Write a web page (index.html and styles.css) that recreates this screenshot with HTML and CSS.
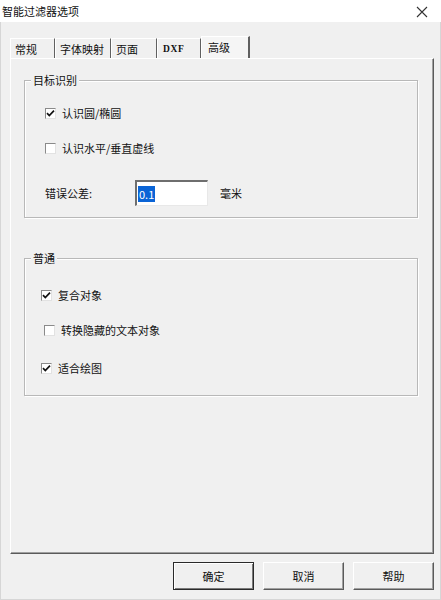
FILE: index.html
```html
<!DOCTYPE html>
<html lang="zh-CN">
<head>
<meta charset="utf-8">
<title>智能过滤器选项</title>
<link rel="stylesheet" href="styles.css">
</head>
<body>
<div class="window">
  <div class="titlebar">
    <span class="title">智能过滤器选项</span>
    <svg class="close" width="12" height="12" viewBox="0 0 12 12"><path d="M1 1 L11 11 M11 1 L1 11" stroke="#333" stroke-width="1.1" fill="none"/></svg>
  </div>
  <div class="tabs">
    <div class="tab t1">常规</div>
    <div class="tab t2">字体映射</div>
    <div class="tab t3">页面</div>
    <div class="tab t4 mono">DXF</div>
    <div class="tab t5 selected">高级</div>
  </div>
  <div class="panel">
    <div class="group g1">
      <span class="group-title">目标识别</span>
      <label class="row r1"><span class="cb checked"><svg width="9" height="9" viewBox="0 0 9 9"><path d="M1 4.2 L3.3 6.6 L8 1.6" stroke="#111" stroke-width="1.7" fill="none"/></svg></span>认识圆/椭圆</label>
      <label class="row r2"><span class="cb"></span>认识水平/垂直虚线</label>
      <div class="row r3">
        <span class="lbl">错误公差:</span>
        <span class="input"><span class="sel">0.1</span></span>
        <span class="unit">毫米</span>
      </div>
    </div>
    <div class="group g2">
      <span class="group-title">普通</span>
      <label class="row s1"><span class="cb checked"><svg width="9" height="9" viewBox="0 0 9 9"><path d="M1 4.2 L3.3 6.6 L8 1.6" stroke="#111" stroke-width="1.7" fill="none"/></svg></span>复合对象</label>
      <label class="row s2"><span class="cb"></span>转换隐藏的文本对象</label>
      <label class="row s3"><span class="cb checked"><svg width="9" height="9" viewBox="0 0 9 9"><path d="M1 4.2 L3.3 6.6 L8 1.6" stroke="#111" stroke-width="1.7" fill="none"/></svg></span>适合绘图</label>
    </div>
  </div>
  <div class="buttons">
    <button class="btn default">确定</button>
    <button class="btn">取消</button>
    <button class="btn">帮助</button>
  </div>
</div>
</body>
</html>
```

FILE: styles.css
```css
* { box-sizing: border-box; }
html, body { margin: 0; padding: 0; background: #f0f0f0; }
body {
  font-family: "Noto Sans CJK SC", "Microsoft YaHei", sans-serif;
  font-size: 11px;
  color: #111;
}
.window {
  width: 441px;
  height: 600px;
  background: #f0f0f0;
  border-left: 1px solid #d6d6d6;
  border-right: 1px solid #d6d6d6;
  border-bottom: 1px solid #d6d6d6;
  display: flex;
  flex-direction: column;
}
.titlebar {
  height: 22px;
  background: #fff;
  display: flex;
  align-items: center;
  justify-content: space-between;
  padding: 0 13px 0 2px;
  margin-left: -1px;
  margin-right: -1px;
}
.title { font-size: 11px; line-height: 14px; color: #111; }
.close { display: block; margin-top: 2px; }

.tabs {
  display: flex;
  align-items: flex-end;
  margin: 14px 0 0 9px;
  height: 22px;
}
.tab {
  height: 20px;
  line-height: 21px;
  padding-left: 4px;
  text-align: left;
  border-top: 1px solid #fff;
  border-left: 1px solid #fff;
  border-right: 1px solid #606060;
  color: #111;
  font-size: 11px;
}
.t1 { width: 45px; }
.t2 { width: 56px; }
.t3 { width: 46px; }
.t4 { width: 44px; padding-left: 5px; }
.t5 { width: 49px; }
.mono { font-family: "Liberation Serif", serif; font-size: 9.5px; font-weight: bold; letter-spacing: 0.6px; }
.tab.selected {
  line-height: 21px;
  padding-left: 6px;
  background: #f5f5f5;
  border-right: 2px solid #606060;
  margin-bottom: -1px;
  height: 23px;
}

.panel {
  margin-left: 9px;
  width: 424px;
  height: 496px;
  border-top: 1px solid #fff;
  border-left: 1px solid #fff;
  border-right: 1px solid #5a5a5a;
  border-bottom: 1px solid #5a5a5a;
  box-shadow: inset -1px -1px 0 #a0a0a0;
  padding: 0 15px 0 13px;
  display: flex;
  flex-direction: column;
}
.group {
  position: relative;
  border: 1px solid #b8b8b8;
  box-shadow: inset 1px 1px 0 #fff, 1px 1px 0 #fff;
  display: flex;
  flex-direction: column;
}
.g1 { margin-top: 21px; height: 138px; padding: 24px 0 0 20px; }
.g2 { margin-top: 40px; height: 138px; padding: 28px 0 0 16px; }
.group-title {
  position: absolute;
  top: -8px;
  left: 6px;
  padding: 0 2px;
  line-height: 14px;
  background: #f0f0f0;
  font-size: 11px;
}
.row {
  display: flex;
  align-items: center;
  height: 16px;
  line-height: 16px;
  font-size: 11px;
}
.r2 { margin-top: 19px; }
.r3 { margin-top: 24px; height: 26px; }
.s2 { margin-top: 19px; padding-left: 3px; }
.s3 { margin-top: 22px; }
.cb {
  width: 11px;
  height: 11px;
  margin-right: 6px;
  background: #fff;
  border-top: 1px solid #8a8a8a;
  border-left: 1px solid #8a8a8a;
  border-right: 1px solid #e2e2e2;
  border-bottom: 1px solid #e2e2e2;
  display: flex;
  align-items: center;
  justify-content: center;
  flex: none;
}
.cb svg { display: block; }
.lbl { width: 90px; }
.input {
  width: 73px;
  height: 26px;
  background: #fff;
  border-top: 2px solid #6e6e6e;
  border-left: 2px solid #6e6e6e;
  border-right: 1px solid #e8e8e8;
  border-bottom: 1px solid #e8e8e8;
  display: flex;
  align-items: center;
  padding-left: 1px;
}
.sel {
  background: #0a64d6;
  color: #fff;
  line-height: 16px;
  padding: 0 1px;
  font-size: 11px;
}
.unit { margin-left: 12px; }

.buttons {
  display: flex;
  justify-content: flex-end;
  gap: 9px;
  margin-top: 8px;
  padding-right: 6px;
}
.btn {
  width: 81px;
  height: 28px;
  font-family: "Noto Sans CJK SC", sans-serif;
  font-size: 11px;
  color: #111;
  background: #f0f0f0;
  border-top: 1px solid #fff;
  border-left: 1px solid #fff;
  border-right: 1px solid #5a5a5a;
  border-bottom: 1px solid #5a5a5a;
  box-shadow: inset -1px -1px 0 #a0a0a0;
  padding: 0;
  margin: 0;
}
.btn.default {
  border: 1px solid #2a2a2a;
  box-shadow: inset 1px 1px 0 #fff, inset -1px -1px 0 #7a7a7a;
}
```
